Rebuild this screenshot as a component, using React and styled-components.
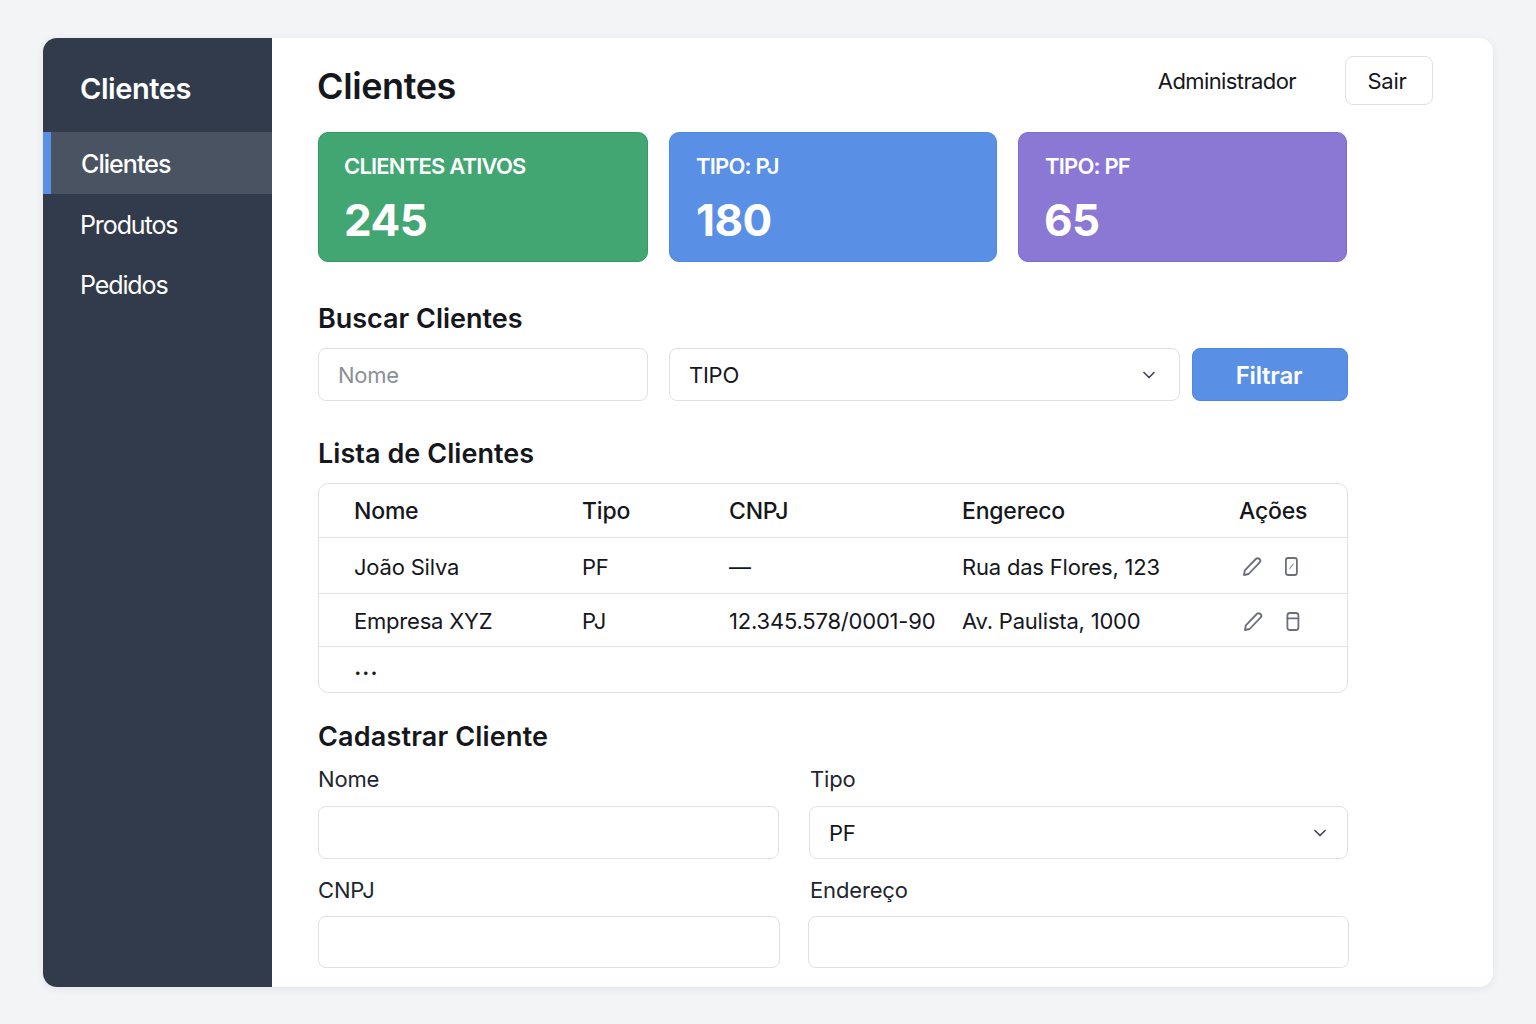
import React from "react";
import styled, { createGlobalStyle } from "styled-components";
import { ChevronDown } from "lucide-react";

const Global = createGlobalStyle`
  html, body { margin: 0; padding: 0; background: #f3f4f6; }
  body { font-family: Inter, "Liberation Sans", sans-serif; color: #15171c; -webkit-font-smoothing: antialiased; }
  * { box-sizing: border-box; }
`;

const Page = styled.div`
  width: 1536px;
  height: 1024px;
  padding: 38px 43px 37px;
`;
const Shell = styled.div`
  display: flex;
  height: 949px;
  width: 1450px;
  background: #fff;
  border-radius: 14px;
  overflow: hidden;
  box-shadow: 0 2px 10px rgba(17, 24, 39, 0.07);
`;
const Sidebar = styled.aside`
  width: 229px;
  flex: none;
  background: #323b4c;
  display: flex;
  flex-direction: column;
`;
const Brand = styled.div`
  height: 94px;
  padding: 33px 0 0 37px;
  font-size: 29px;
  line-height: 35px;
  font-weight: 600;
  letter-spacing: -0.45px;
  color: #fff;
`;
const NavItem = styled.div`
  height: ${(p) => (p.$active ? 62 : 60)}px;
  padding: 2px 0 0 ${(p) => (p.$active ? 30 : 37)}px;
  display: flex;
  align-items: center;
  border-left: ${(p) => (p.$active ? "8px solid #5a8fe6" : "none")};
  background: ${(p) => (p.$active ? "#4a5362" : "transparent")};
  color: #fff;
  font-size: 25px;
  font-weight: ${(p) => (p.$active ? 500 : 400)};
  letter-spacing: ${(p) => (p.$active ? -0.95 : -1.1)}px;
`;
const Main = styled.main`
  flex: 1;
  min-width: 0;
  padding: 18px 60px 0 46px;
`;
const Header = styled.header`
  display: flex;
  justify-content: space-between;
  align-items: flex-start;
  height: 76px;
`;
const Title = styled.h1`
  margin: 8px 0 0 -1px;
  font-size: 36px;
  line-height: 44px;
  font-weight: 600;
  letter-spacing: -0.4px;
  color: #15171c;
`;
const UserBox = styled.div`
  display: flex;
  align-items: center;
  gap: 49px;
`;
const UserName = styled.span`
  font-size: 22px;
  letter-spacing: -0.6px;
  color: #15171c;
`;
const LogoutButton = styled.button`
  width: 88px;
  height: 49px;
  padding: 0 4px 0 0;
  background: #fff;
  border: 1px solid #e0e0e8;
  border-radius: 8px;
  font: 400 22px Inter, sans-serif;
  letter-spacing: -0.3px;
  color: #15171c;
`;
const Content = styled.div`
  width: 1030px;
`;
const Stats = styled.section`
  display: grid;
  grid-template-columns: 330px 328px 329px;
  gap: 21px;
`;
const StatCard = styled.div`
  height: 130px;
  border-radius: 10px;
  background: ${(p) => p.$bg};
  border: 1px solid ${(p) => p.$line};
  padding: 19px 0 0 ${(p) => p.$pad}px;
  color: #fff;
`;
const StatLabel = styled.div`
  font-size: 22px;
  line-height: 28px;
  font-weight: 600;
  letter-spacing: -0.8px;
`;
const StatValue = styled.div`
  margin: 12px 0 0 ${(p) => p.$nudge || 0}px;
  font-size: 44px;
  line-height: 56px;
  font-weight: 700;
  letter-spacing: -0.5px;
`;
const SectionTitle = styled.h2`
  margin: ${(p) => p.$top}px 0 0;
  font-size: 27px;
  line-height: 34px;
  font-weight: 600;
  letter-spacing: ${(p) => p.$track}px;
  color: #15171c;
`;
const FilterRow = styled.div`
  display: grid;
  grid-template-columns: 330px 511px 156px;
  column-gap: 21px;
  margin-top: 12px;
  & > :nth-child(3) { margin-left: -9px; width: 156px; }
`;
const Field = styled.div`
  height: ${(p) => p.$h || 53}px;
  margin: 0 ${(p) => p.$mr || 0}px 0 ${(p) => p.$ml || 0}px;
  border: 1px solid #dfe1e6;
  border-radius: 8px;
  background: #fff;
  display: flex;
  align-items: center;
  justify-content: space-between;
  padding: 0 ${(p) => p.$chevronPad || 20}px 0 19px;
  font-size: 22px;
  letter-spacing: -0.25px;
  color: ${(p) => (p.$muted ? "#8b8f97" : "#15171c")};
`;
const Chevron = styled(ChevronDown)`
  width: 20px;
  height: 20px;
  color: #3f4650;
`;
const PrimaryButton = styled.button`
  height: 53px;
  padding: 2px 2px 0 0;
  background: #5a8fe6;
  border: 1px solid #4f87e4;
  border-radius: 8px;
  color: #fff;
  font: 600 24px Inter, sans-serif;
  letter-spacing: -0.2px;
`;
const Table = styled.div`
  margin-top: 12px;
  border: 1px solid #dfe1e6;
  border-radius: 10px;
  background: #fff;
  overflow: hidden;
`;
const Row = styled.div`
  display: grid;
  grid-template-columns: 228px 147px 233px 277px 1fr;
  align-items: center;
  height: ${(p) => p.$h}px;
  padding: ${(p) => (p.$head ? 0 : 2)}px 0 0 35px;
  font-size: ${(p) => (p.$head ? 23 : 22)}px;
  font-weight: ${(p) => (p.$head ? 500 : 400)};
  letter-spacing: -0.2px;
  color: #15171c;
  border-bottom: ${(p) => (p.$last ? "none" : "1px solid #dfe1e6")};
`;
const Ellipsis = styled.span`
  font-size: 26px;
  line-height: 20px;
  letter-spacing: 0.6px;
  margin-bottom: 10px;
`;
const Actions = styled.div`
  display: flex;
  align-items: center;
  gap: 20px;
  padding-left: ${(p) => p.$shift}px;
  color: #6b7078;
`;
const IconSvg = styled.svg`
  width: 21px;
  height: 21px;
  fill: none;
  stroke: currentColor;
  stroke-width: 1.8;
  stroke-linecap: round;
  stroke-linejoin: round;
`;
const FormGrid = styled.div`
  display: grid;
  grid-template-columns: 461px 539px;
  column-gap: 30px;
  margin-top: 10px;
  width: 1030px;
`;
const FormCell = styled.div`
  margin-bottom: ${(p) => p.$mb || 0}px;
`;
const Label = styled.div`
  font-size: 22px;
  line-height: 30px;
  letter-spacing: -0.15px;
  margin: 0 0 ${(p) => p.$gap}px ${(p) => p.$in || 0}px;
  color: #1f2530;
`;

const PencilIcon = () => (
  <IconSvg viewBox="0 0 21 21">
    <path d="M3 19 3.8 14.3 14.8 3a2.6 2.6 0 0 1 3.7 3.7L7.6 18Z" />
  </IconSvg>
);
const SlashPhone = () => (
  <IconSvg viewBox="0 0 21 21">
    <rect x="3.9" y="2" width="11" height="17" rx="2.2" />
    <path d="M11.2 8 7.8 12.6" strokeWidth="1" />
  </IconSvg>
);
const Bin = () => (
  <IconSvg viewBox="0 0 21 21">
    <path d="M6.9 2h6a2.5 2.5 0 0 1 2.5 2.5V16.5a2.5 2.5 0 0 1-2.5 2.5h-6a2.5 2.5 0 0 1-2.5-2.5V4.5A2.5 2.5 0 0 1 6.9 2Z" />
    <path d="M4.4 7.3h11" />
  </IconSvg>
);

export default function App() {
  return (
    <Page>
      <Global />
      <Shell>
        <Sidebar>
          <Brand>Clientes</Brand>
          <NavItem $active>Clientes</NavItem>
          <NavItem>Produtos</NavItem>
          <NavItem>Pedidos</NavItem>
        </Sidebar>
        <Main>
          <Header>
            <Title>Clientes</Title>
            <UserBox>
              <UserName>Administrador</UserName>
              <LogoutButton>Sair</LogoutButton>
            </UserBox>
          </Header>
          <Content>
            <Stats>
              <StatCard $bg="#41a671" $line="#2f9c63" $pad={25}>
                <StatLabel>CLIENTES ATIVOS</StatLabel>
                <StatValue>245</StatValue>
              </StatCard>
              <StatCard $bg="#5a8fe6" $line="#4f87e4" $pad={26}>
                <StatLabel>TIPO: PJ</StatLabel>
                <StatValue>180</StatValue>
              </StatCard>
              <StatCard $bg="#8b78d4" $line="#7f6bd0" $pad={26}>
                <StatLabel>TIPO: PF</StatLabel>
                <StatValue $nudge={-1}>65</StatValue>
              </StatCard>
            </Stats>
            <SectionTitle $top={40} $track={-0.02}>Buscar Clientes</SectionTitle>
            <FilterRow>
              <Field $muted>Nome</Field>
              <Field>
                TIPO
                <Chevron />
              </Field>
              <PrimaryButton>Filtrar</PrimaryButton>
            </FilterRow>
            <SectionTitle $top={36} $track={0.05}>Lista de Clientes</SectionTitle>
            <Table>
              <Row $head $h={54}>
                <span>Nome</span>
                <span>Tipo</span>
                <span>CNPJ</span>
                <span>Engereco</span>
                <span>Ações</span>
              </Row>
              <Row $h={56}>
                <span>João Silva</span>
                <span>PF</span>
                <span>—</span>
                <span>Rua das Flores, 123</span>
                <Actions $shift={2}>
                  <PencilIcon />
                  <SlashPhone />
                </Actions>
              </Row>
              <Row $h={53}>
                <span>Empresa XYZ</span>
                <span>PJ</span>
                <span>12.345.578/0001-90</span>
                <span>Av. Paulista, 1000</span>
                <Actions $shift={3}>
                  <PencilIcon />
                  <Bin />
                </Actions>
              </Row>
              <Row $last $h={45}>
                <Ellipsis>...</Ellipsis>
              </Row>
            </Table>
            <SectionTitle $top={27} $track={0.17}>Cadastrar Cliente</SectionTitle>
            <FormGrid>
              <FormCell $mb={16}>
                <Label $gap={12}>Nome</Label>
                <Field />
              </FormCell>
              <FormCell $mb={16}>
                <Label $gap={12} $in={1}>Tipo</Label>
                <Field $chevronPad={17}>
                  PF
                  <Chevron />
                </Field>
              </FormCell>
              <FormCell>
                <Label $gap={11}>CNPJ</Label>
                <Field $h={52} $mr={-1} />
              </FormCell>
              <FormCell>
                <Label $gap={11} $in={1}>Endereço</Label>
                <Field $h={52} $ml={-1} $mr={-1} />
              </FormCell>
            </FormGrid>
          </Content>
        </Main>
      </Shell>
    </Page>
  );
}
